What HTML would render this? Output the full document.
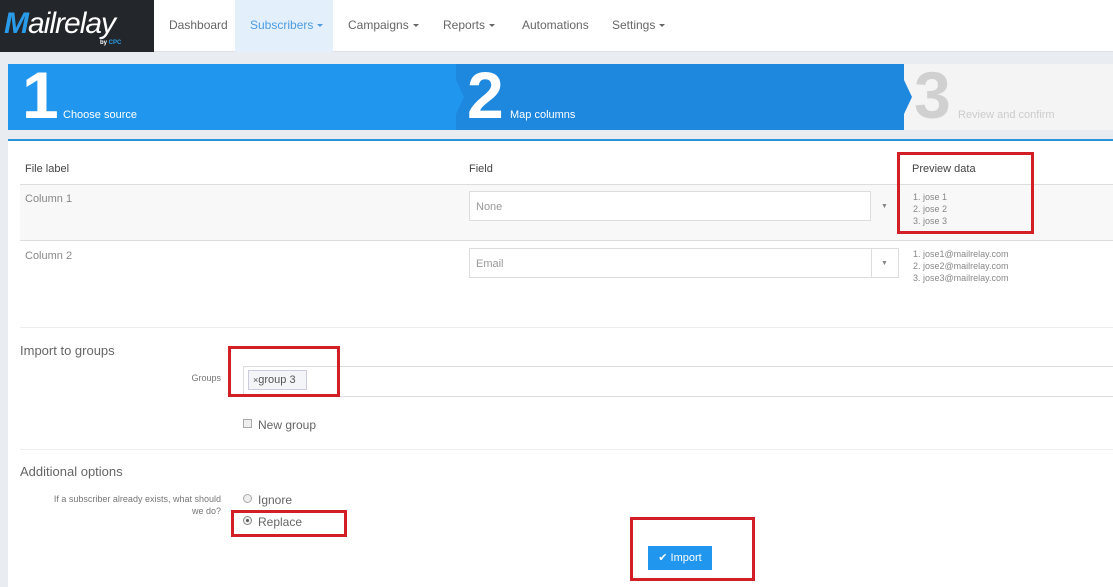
<!DOCTYPE html>
<html><head><style>
*{box-sizing:border-box;margin:0;padding:0}
body{width:1113px;height:587px;overflow:hidden;background:#e9ecf0;font-family:"Liberation Sans",sans-serif;position:relative;color:#555}
.a{position:absolute}
.nav{left:0;top:0;width:1113px;height:52px;background:#fff;border-bottom:1px solid #dde1e6}
.logo{left:0;top:0;width:154px;height:52px;background:#23272b}
.ni{top:18px;font-size:12px;color:#666}
.car{display:inline-block;border-left:3px solid transparent;border-right:3px solid transparent;border-top:3px solid currentColor;vertical-align:middle;margin-left:4px}
.num{font-size:66px;font-weight:bold;line-height:66px;top:62px}
.st{font-size:11px;top:109px}
.red{border:3px solid #d21f26}
.sm{font-size:9px;color:#888;line-height:12px}
</style></head><body>
<div class="a nav"></div>
<div class="a logo"><div class="a" style="left:4px;top:7px;font-size:30px;font-style:italic;font-weight:bold;color:#2a9be8;letter-spacing:-1px">M<span style="color:#fff;font-weight:normal;font-style:italic">ailrelay</span></div><div class="a" style="left:100px;top:40px;font-size:6px;color:#fff;font-weight:bold">by <span style="color:#2a9be8">CPC</span></div></div>
<div class="a" style="left:235px;top:0;width:98px;height:52px;background:#e3f0fb"></div>
<div class="a ni" style="left:169px">Dashboard</div>
<div class="a ni" style="left:250px;color:#4d9be0">Subscribers<span class="car"></span></div>
<div class="a ni" style="left:348px">Campaigns<span class="car"></span></div>
<div class="a ni" style="left:443px">Reports<span class="car"></span></div>
<div class="a ni" style="left:522px">Automations</div>
<div class="a ni" style="left:612px">Settings<span class="car"></span></div>

<div class="a" style="left:8px;top:64px;width:448px;height:66px;background:#2196ee"></div>
<div class="a" style="left:456px;top:64px;width:448px;height:66px;background:#1e88df"></div>
<div class="a" style="left:904px;top:64px;width:209px;height:66px;background:#f4f4f4"></div>
<div class="a" style="left:456px;top:80px;width:0;height:0;border-top:17px solid transparent;border-bottom:17px solid transparent;border-left:8px solid #2196ee"></div>
<div class="a" style="left:904px;top:80px;width:0;height:0;border-top:17px solid transparent;border-bottom:17px solid transparent;border-left:8px solid #1e88df"></div>
<div class="a num" style="left:22px;color:#fff">1</div><div class="a st" style="left:63px;color:#fff">Choose source</div>
<div class="a num" style="left:467px;color:#fff">2</div><div class="a st" style="left:510px;color:#fff">Map columns</div>
<div class="a num" style="left:914px;color:#d0d0d0">3</div><div class="a st" style="left:958px;color:#ccc">Review and confirm</div>

<div class="a" style="left:8px;top:139px;width:1105px;height:448px;background:#fff;border-top:2px solid #2a93dc"></div>
<div class="a" style="left:20px;top:184px;width:1093px;height:57px;background:#f8f8f8;border-top:1px solid #ddd;border-bottom:1px solid #ddd"></div>
<div class="a" style="left:25px;top:163px;font-size:11px;color:#444">File label</div>
<div class="a" style="left:469px;top:163px;font-size:11px;color:#444">Field</div>
<div class="a" style="left:912px;top:163px;font-size:11px;color:#444">Preview data</div>
<div class="a" style="left:25px;top:193px;font-size:11px;color:#888">Column 1</div>
<div class="a" style="left:25px;top:250px;font-size:11px;color:#888">Column 2</div>
<div class="a" style="left:469px;top:191px;width:402px;height:30px;border:1px solid #ddd;background:#fff;font-size:11px;color:#999;padding:9px 6px">None</div>
<div class="a" style="left:469px;top:248px;width:430px;height:30px;border:1px solid #ddd;background:#fff;font-size:11px;color:#999;padding:9px 6px">Email</div>
<div class="a" style="left:871px;top:248px;width:1px;height:30px;background:#ddd"></div>
<div class="a" style="left:881px;top:203px;font-size:7px;color:#888">▼</div>
<div class="a" style="left:881px;top:260px;font-size:7px;color:#888">▼</div>
<div class="a sm" style="left:913px;top:191px">1. jose 1<br>2. jose 2<br>3. jose 3</div>
<div class="a sm" style="left:913px;top:248px">1. jose1@mailrelay.com<br>2. jose2@mailrelay.com<br>3. jose3@mailrelay.com</div>
<div class="a" style="left:20px;top:327px;width:1093px;height:1px;background:#eee"></div>
<div class="a" style="left:20px;top:343px;font-size:13px;color:#666">Import to groups</div>
<div class="a" style="left:150px;top:373px;width:71px;text-align:right;font-size:9px;color:#777">Groups</div>
<div class="a" style="left:243px;top:366px;width:870px;height:31px;border-top:1px solid #ddd;border-bottom:1px solid #ddd;border-left:1px solid #ddd"></div>
<div class="a" style="left:248px;top:370px;width:59px;height:20px;border:1px solid #ccd;background:#f4f5f8;font-size:11px;color:#555;padding:3px 4px"><span style="font-size:9px">×</span>group 3</div>
<div class="a" style="left:243px;top:419px;width:9px;height:9px;border:1px solid #aaa;background:#eee"></div>
<div class="a" style="left:258px;top:418px;font-size:12px;color:#666">New group</div>
<div class="a" style="left:20px;top:449px;width:1093px;height:1px;background:#eee"></div>
<div class="a" style="left:20px;top:464px;font-size:13px;color:#666">Additional options</div>
<div class="a" style="left:20px;top:493px;width:201px;text-align:right;font-size:9px;color:#777;line-height:12px">If a subscriber already exists, what should<br>we do?</div>
<div class="a" style="left:243px;top:494px;width:9px;height:9px;border:1px solid #aaa;border-radius:50%;background:#eee"></div>
<div class="a" style="left:258px;top:493px;font-size:12px;color:#666">Ignore</div>
<div class="a" style="left:243px;top:516px;width:9px;height:9px;border:1px solid #888;border-radius:50%;background:#eee"><div style="margin:2px;width:3px;height:3px;border-radius:50%;background:#555"></div></div>
<div class="a" style="left:258px;top:515px;font-size:12px;color:#666">Replace</div>
<div class="a" style="left:648px;top:546px;width:64px;height:24px;background:#2196ee;color:#fff;font-size:11px;text-align:center;line-height:24px">✔ Import</div>

<div class="a red" style="left:897px;top:152px;width:137px;height:82px"></div>
<div class="a red" style="left:228px;top:346px;width:112px;height:51px"></div>
<div class="a red" style="left:231px;top:510px;width:116px;height:27px"></div>
<div class="a red" style="left:630px;top:517px;width:125px;height:64px"></div>
</body></html>
